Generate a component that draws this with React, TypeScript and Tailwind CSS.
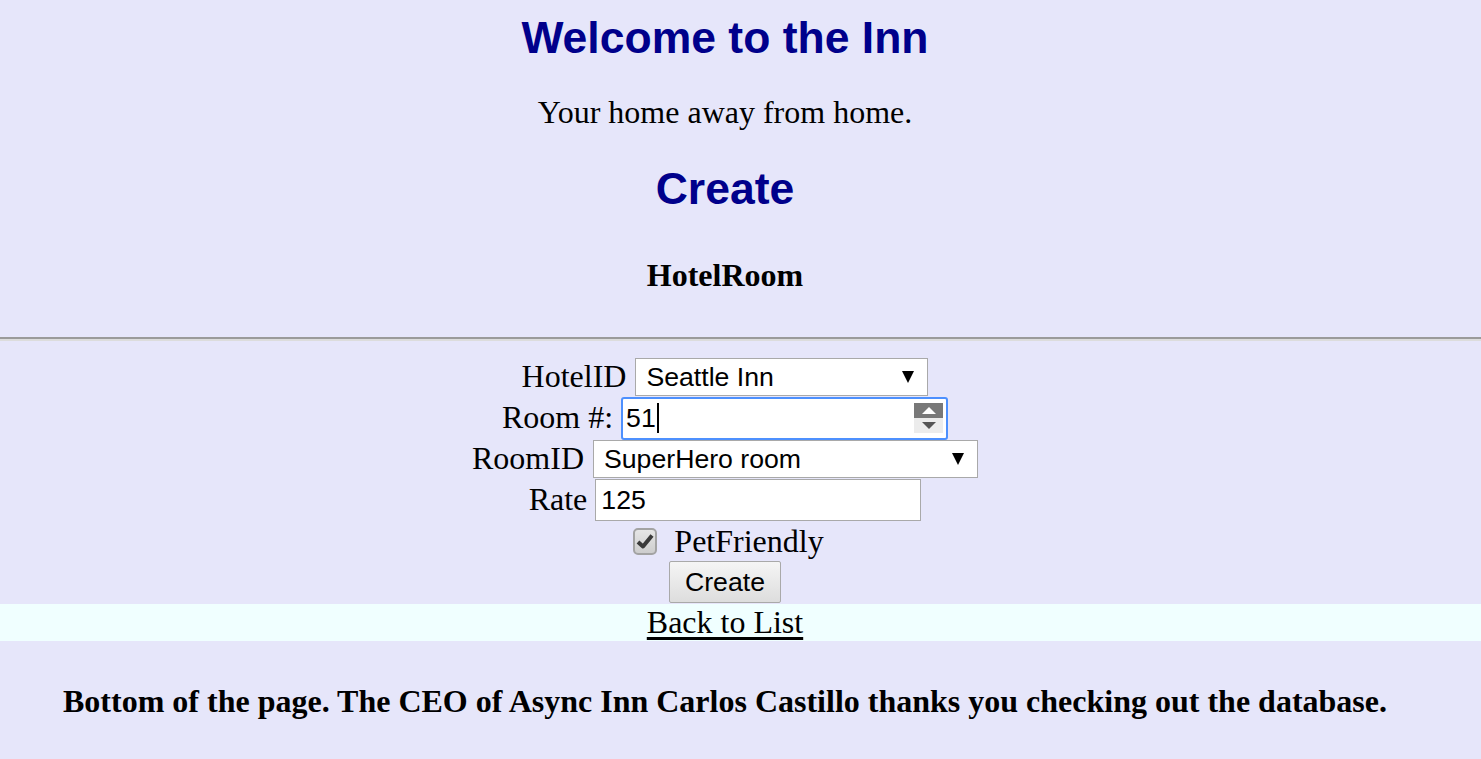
const sans = "font-['Liberation_Sans',Arial,sans-serif]";

const Arrow = () => (
  <svg width="12" height="12" viewBox="0 0 12 12" className="absolute right-[13px] top-[12px]">
    <polygon points="0,0 12,0 6,12" fill="#000" />
  </svg>
);

const Label = ({ children }: { children: string }) => (
  <label className="text-[32px] leading-[36px] pb-[2px]">{children}</label>
);

const App = () => {
  return (
    <div className="min-h-screen bg-[#e6e6fa] font-['Liberation_Serif','Times_New_Roman',serif] text-black overflow-hidden">
      <div className="w-[1450px] flex flex-col items-center">
        <h1 className={`mt-[12px] text-[44.5px] leading-[51px] font-bold text-[#00008b] ${sans}`}>
          Welcome to the Inn
        </h1>
        <p className="mt-[31px] text-[32px] leading-[36px]">Your home away from home.</p>
        <h2 className={`mt-[33px] text-[44.5px] leading-[51px] font-bold text-[#00008b] ${sans}`}>Create</h2>
        <h4 className="mt-[43px] text-[32px] leading-[36px] font-bold">HotelRoom</h4>
      </div>

      <hr className="mt-[44px] h-0 border-x-0 border-t-2 border-b-2 border-t-[#9a9a9a] border-b-[#dcdcdc]" />

      <form className="mt-[17px] w-[1450px] flex flex-col items-center">
        {/* HotelID */}
        <div className="h-[38px] flex items-center gap-[9px]">
          <Label>HotelID</Label>
          <div className={`relative h-[38px] w-[293px] border border-[#a9a9a9] bg-white pl-[10px] flex items-center text-[26.67px] ${sans}`}>
            Seattle Inn
            <Arrow />
          </div>
        </div>

        {/* Room # */}
        <div className="h-[44px] flex items-center gap-[8px]">
          <Label>Room #:</Label>
          <div className={`h-[43px] w-[327px] rounded-[3px] border-2 border-[#4d90fe] bg-white pl-[3px] flex items-center text-[26.67px] ${sans}`}>
            51
            <span className="ml-[1px] w-[2px] h-[30px] bg-black"></span>
            <div className="ml-auto mr-[3px] w-[29px] h-[30px] flex flex-col">
              <div className="h-[15px] bg-[#787878] flex items-center justify-center">
                <svg width="14" height="7" viewBox="0 0 14 7">
                  <polygon points="0,7 14,7 7,0" fill="#fff" />
                </svg>
              </div>
              <div className="h-[15px] bg-[#ececec] flex items-center justify-center">
                <svg width="14" height="7" viewBox="0 0 14 7">
                  <polygon points="0,0 14,0 7,7" fill="#555" />
                </svg>
              </div>
            </div>
          </div>
        </div>

        {/* RoomID */}
        <div className="h-[38px] flex items-center gap-[9px]">
          <Label>RoomID</Label>
          <div className={`relative h-[38px] w-[385px] border border-[#a9a9a9] bg-white pl-[10px] flex items-center text-[26.67px] ${sans}`}>
            SuperHero room
            <Arrow />
          </div>
        </div>

        {/* Rate */}
        <div className="h-[43px] flex items-center gap-[8px]">
          <Label>Rate</Label>
          <div className={`h-[42px] w-[326px] border border-[#a9a9a9] bg-white pl-[5px] flex items-center text-[26.67px] ${sans}`}>
            125
          </div>
        </div>

        {/* PetFriendly */}
        <div className="h-[40px] flex items-center gap-[17px] pl-[7px]">
          <div className="w-[24px] h-[27px] rounded-[5px] border-2 border-[#a3a3a3] bg-gradient-to-b from-[#e6e6e6] to-[#cdcdcd] flex items-center justify-center">
            <svg width="18" height="16" viewBox="0 0 18 16">
              <path d="M2 9 L7 13.5 L16 2.5" stroke="#3a3a3a" strokeWidth="4" fill="none" strokeLinejoin="round" />
            </svg>
          </div>
          <label className="text-[32px] leading-[36px]">PetFriendly</label>
        </div>

        {/* Submit */}
        <div className="h-[43px] flex items-start">
          <button
            type="button"
            className={`h-[42px] w-[112px] rounded-[2px] border border-[#a9a9a9] bg-gradient-to-b from-[#f5f5f5] to-[#dddddd] text-[26.67px] ${sans}`}
          >
            Create
          </button>
        </div>
      </form>

      <div className="h-[37px] bg-[#f0ffff]">
        <div className="w-[1450px] flex justify-center">
          <a href="#" className="text-[32px] leading-[37px] underline decoration-[3px] underline-offset-[4px]">
            Back to List
          </a>
        </div>
      </div>

      <div className="w-[1450px] flex justify-center mt-[42px]">
        <h4 className="text-[32px] leading-[36px] font-bold">
          Bottom of the page. The CEO of Async Inn Carlos Castillo thanks you checking out the database.
        </h4>
      </div>
    </div>
  );
};

export default App;
